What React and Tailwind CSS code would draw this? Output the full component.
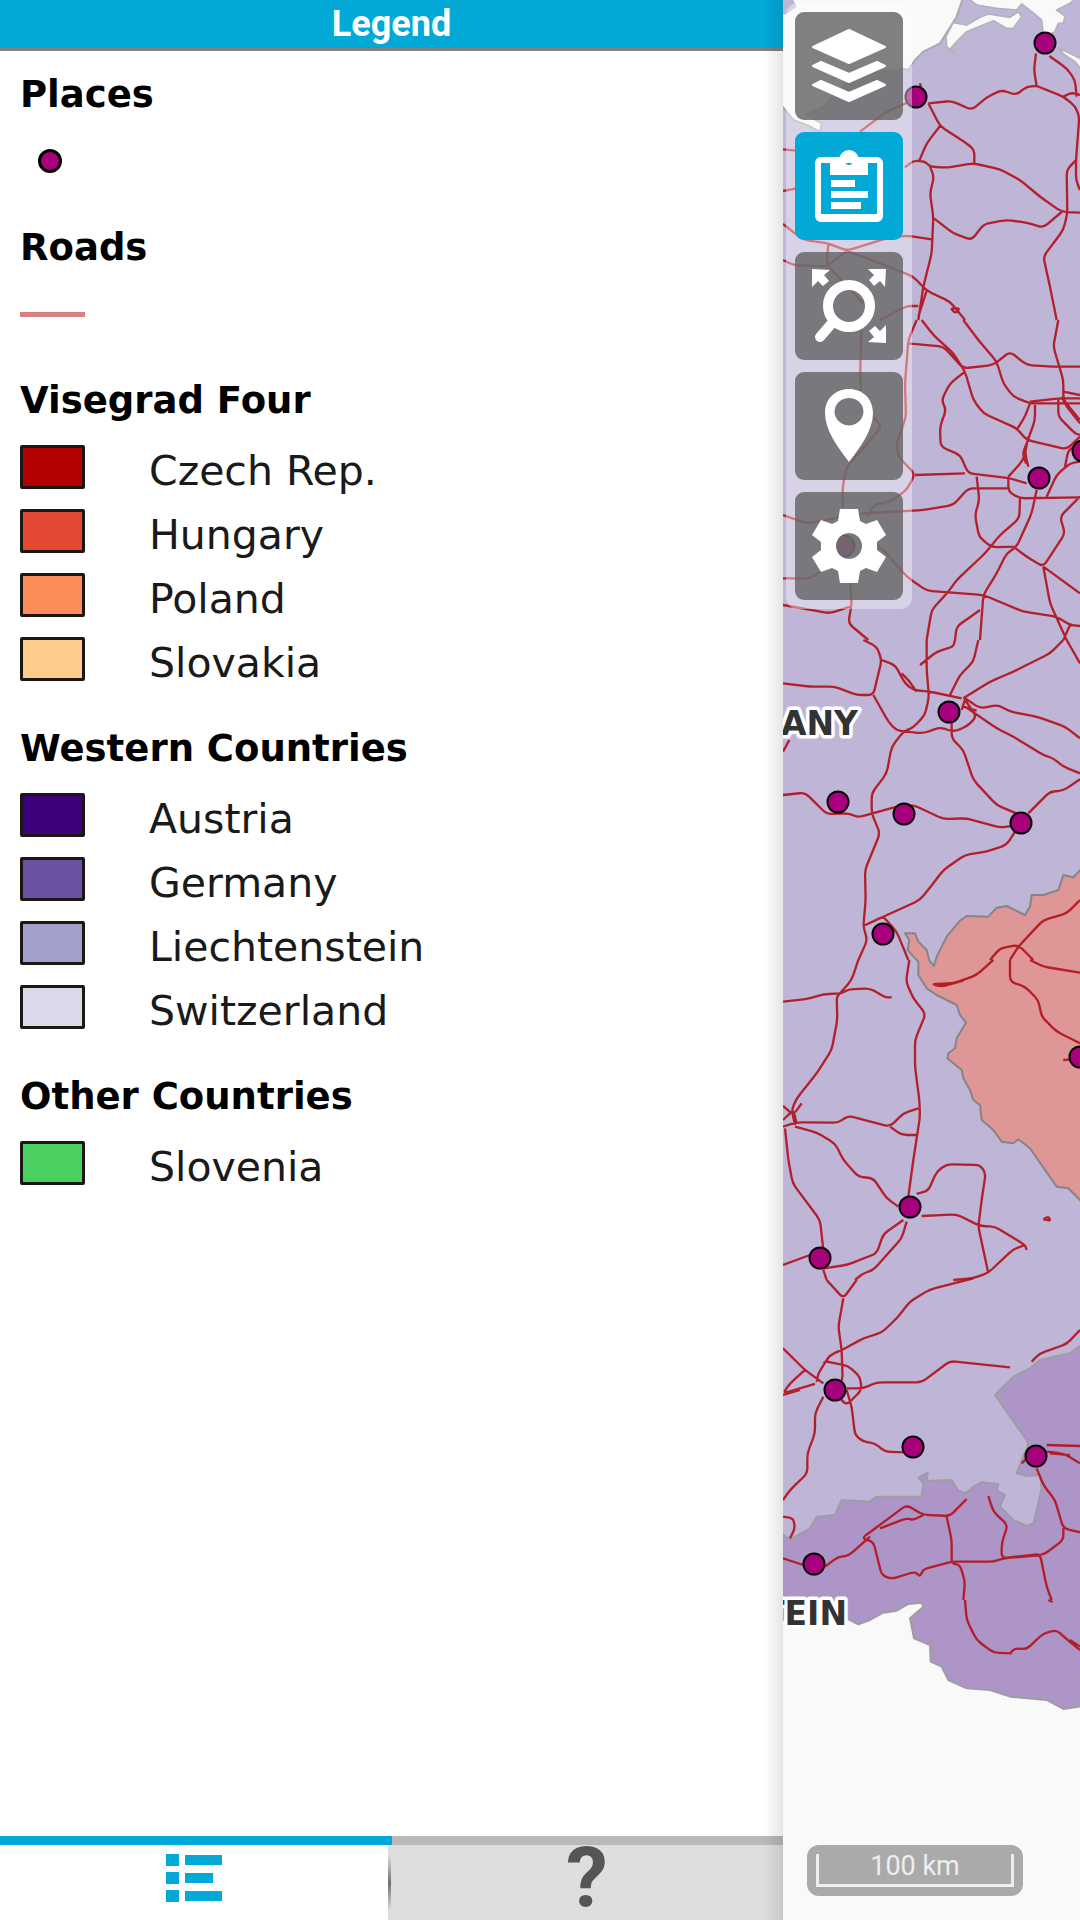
import React, { useState } from "react";

const legend = [
  { title: "Places", symbol: "point" },
  { title: "Roads", symbol: "line" },
  {
    title: "Visegrad Four",
    items: [
      ["Czech Rep.", "bg-[#b30000]"],
      ["Hungary", "bg-[#e34a33]"],
      ["Poland", "bg-[#fc8d59]"],
      ["Slovakia", "bg-[#fdcc8a]"],
    ],
  },
  {
    title: "Western Countries",
    items: [
      ["Austria", "bg-[#3f007d]"],
      ["Germany", "bg-[#6a51a3]"],
      ["Liechtenstein", "bg-[#a29fca]"],
      ["Switzerland", "bg-[#dadaeb]"],
    ],
  },
  { title: "Other Countries", items: [["Slovenia", "bg-[#4bd162]"]] },
];

/* Road tiles: [vertical tile offset, path in tile units (3 per map unit)] */
const roads = [
  [
    0,
    "M768,160 L762,210 770,258 M770,258 L740,260 708,285 665,270 620,292 575,330 515,303 445,310 M770,258 L850,290 885,318 898,350 888,480 888,540 900,570 M808,168 L860,205 885,240 890,290 M850,290 L875,278 900,285 M445,310 L480,378 560,430 583,450 583,492 M480,378 L440,430 418,482 M375,502 L400,482 435,484 450,500 500,503 580,490 660,508 720,540 780,590 845,636 900,638 M450,500 L462,530 450,580 460,650 455,760 430,860 415,960 M462,655 L520,700 575,720 612,672 680,660 740,668 790,683 845,636 M888,480 L860,510 862,640 850,690 790,770 810,860 830,960 M455,718 L380,707 320,715 200,752 145,730 70,720 9,672 M145,730 L140,790 160,815 250,910 M9,780 L40,795 140,800 200,752 300,790 400,830 440,872 510,905 555,960 M240,395 L320,335 400,300 M9,448 L50,452 M9,573 L50,565 M440,872 L415,950 M415,918 L380,918 300,960 M515,925 L540,925 525,940 513,925 M420,250 L425,270",
  ],
  [
    960,
    "M410,0 L385,60 375,190 378,290 350,370 355,410 405,462 380,510 330,545 280,555 265,590 M245,0 L240,180 245,210 M280,290 L305,320 245,390 200,440 188,500 188,560 M405,465 L555,460 M385,70 L490,80 550,145 640,135 690,95 740,135 820,140 900,140 M425,0 L460,45 520,100 555,155 580,240 610,280 710,325 740,360 860,388 900,350 M550,0 L595,60 650,125 670,190 700,230 750,250 900,250 M835,0 L820,80 850,180 850,240 900,300 M555,155 L510,190 485,240 498,270 480,320 482,380 540,405 565,460 690,475 740,490 M9,585 L80,610 250,580 430,570 520,555 565,505 690,505 M590,470 L598,540 585,585 597,650 635,682 710,680 M685,470 L685,515 720,535 900,532 M720,535 L718,595 660,645 615,700 530,780 505,815 455,870 440,960 M770,510 L755,580 710,680 680,700 650,760 610,825 600,960 M765,255 L765,300 740,370 730,420 685,470 M750,250 L735,290 710,330 M745,350 L735,400 745,440 M740,370 L728,400 738,430 M900,530 L840,590 855,640 790,740 740,710 700,680 M790,740 L900,820 M790,740 L810,850 860,960 M9,775 L90,775 210,700 M250,640 L320,700 380,770 440,812 610,825 730,875 830,890 870,915 900,918 M210,780 L215,850 205,910 265,960 M9,855 L150,880 210,860 M600,870 L530,920 525,960 M750,245 L840,235 900,235 M850,215 L900,225 M835,240 L835,290 885,340 900,345 M845,230 L860,260 900,310 M800,530 L830,465 870,430 900,425 M900,370 L865,390 855,440 M850,960 L870,915",
  ],
  [
    1920,
    "M9,130 L90,140 165,140 230,165 280,165 305,60 290,20 250,0 M305,60 L345,75 375,130 400,150 450,155 545,175 M365,100 L385,120 410,155 M280,165 L325,245 350,272 430,280 480,262 520,275 560,260 590,230 555,180 M440,0 L440,90 447,170 435,225 400,262 370,275 335,320 320,400 275,460 275,520 300,580 255,690 257,780 250,860 262,900 235,960 M420,75 L470,35 520,20 525,0 M595,0 L580,65 540,105 510,165 M850,0 L810,40 700,95 630,125 550,175 M860,0 L900,70 M555,175 L600,205 655,195 690,215 770,230 855,260 900,295 M555,200 L650,265 700,290 790,345 820,355 850,380 900,400 M550,200 L590,212 M545,210 L555,178 M515,250 L515,295 550,330 580,420 650,495 720,525 M9,465 L75,458 140,522 205,520 235,532 350,500 400,495 490,537 560,535 660,563 720,555 M745,520 L810,455 850,452 900,418 M705,575 L680,615 620,635 555,645 490,690 460,730 420,780 310,830 250,858 M310,830 L350,875 385,960 M900,780 L860,820 790,840 715,920 690,960 M630,960 L660,925 715,915 760,960 M9,335 L28,300",
  ],
  [
    2880,
    "M235,0 L215,60 185,95 170,110 172,180 155,270 110,340 50,415 35,450 45,495 M9,125 L80,117 130,103 185,100 205,88 270,85 315,112 335,112 M388,0 L378,65 400,115 437,162 405,240 405,320 418,420 420,470 400,600 385,710 M9,438 L40,465 65,430 M20,470 L40,450 50,490 M9,480 L25,465 M9,500 L50,487 175,488 205,467 330,500 370,460 415,445 M330,500 L365,525 410,525 M45,500 L110,518 165,550 190,600 235,650 280,655 320,715 355,740 M15,505 L25,600 38,670 120,780 130,870 M410,702 L445,692 470,635 500,613 600,615 617,640 605,720 595,800 625,940 M425,768 L530,763 600,798 645,800 735,855 740,870 M735,855 L700,868 625,938 580,955 520,960 M370,780 L310,822 290,880 200,915 130,925 M380,785 L365,835 280,930 250,940 225,960 M9,915 L90,885 M130,930 L140,960 M640,0 L590,45 520,70 455,72 485,80 550,62 M690,0 L690,65 735,80 775,120 785,170 830,215 900,250 M750,0 L790,20 900,38 M790,778 L805,770 812,782 790,778 M850,300 L875,298",
  ],
  [
    3840,
    "M140,0 L190,55 230,0 M190,55 L175,140 185,210 188,300 170,320 M580,-5 L450,28 390,65 350,115 305,158 250,175 190,208 150,225 115,280 110,305 M9,205 L75,270 130,310 M75,270 L30,310 9,340 105,312 M9,345 L60,330 M140,245 L205,258 240,290 245,330 200,375 180,355 M130,250 L145,240 M200,325 L250,325 290,307 425,307 510,243 690,262 M130,350 L105,400 105,460 82,520 82,580 30,630 9,660 M200,330 L215,380 225,465 250,485 285,490 315,515 375,517 M755,245 L780,220 860,192 900,150 M800,495 L900,498 M800,515 L850,520 900,550 M810,520 L870,525 M725,550 L740,535 M770,565 L790,615 825,660 850,745 900,757 M850,745 L850,780 790,825 670,835 640,845 515,845 430,868 420,890 405,875 335,897 305,885 280,785 245,775 290,742 380,675 430,705 510,708 560,657 M300,745 L380,715 400,720 430,705 M500,710 L515,780 515,850 540,855 555,905 550,960 M625,648 L640,695 683,735 665,790 665,835 780,822 800,920 815,960 M270,770 L205,828 175,830 135,860 M9,835 L70,855 M9,710 L40,715 45,745 30,775 M555,960 L560,1020 590,1080 640,1118 695,1120 M690,1120 L705,1105 740,1108 790,1060 830,1050 860,1078 900,1110 M870,1080 L900,1100 M805,960 L818,966",
  ],
];

const BEND = 16;

/* Point on the way from one corner to the next, where the bend starts. */
function bendPoint([x, y], [tx, ty]) {
  const length = Math.hypot(tx - x, ty - y);
  const share = Math.min(0.4, BEND / length);
  return [x + (tx - x) * share, y + (ty - y) * share];
}

/* Rounds the bends of a polyline path, keeping its end points. */
function smooth(path) {
  return path
    .split("M")
    .filter((part) => part.trim())
    .map((part) => {
      const pts = part
        .replace("L", "")
        .trim()
        .split(/\s+/)
        .map((pair) => pair.split(",").map(Number));
      let d = `M${pts[0]}`;
      for (let i = 1; i < pts.length - 1; i++) {
        d += ` L${bendPoint(pts[i], pts[i - 1])} Q${pts[i]} ${bendPoint(pts[i], pts[i + 1])}`;
      }
      return `${d} L${pts[pts.length - 1]}`;
    })
    .join(" ");
}

const places = [
  [136, 97], [265, 43], [64, 546], [259, 478], [303, 451], [169, 712], [58, 802],
  [124, 814], [241, 823], [103, 934], [130, 1207], [40, 1258], [300, 1057],
  [55, 1390], [133, 1447], [256, 1456], [34, 1564],
];

function MapCanvas() {
  return (
    <svg
      className="absolute inset-0 h-full w-full"
      viewBox="3 0 297 1920"
      preserveAspectRatio="xMinYMin slice"
      role="img"
      aria-label="Map"
    >
      <rect width="320" height="1920" fill="#f9f9f9" />
      <g transform="scale(0.33333)" strokeLinejoin="round" strokeWidth="6">
        <path
          d="M550,-10 L530,50 480,130 430,155 405,180 385,210 370,206 260,220 190,260 130,320 80,345 125,370 120,395 80,375 40,360 0,310 V4700 H920 V-10Z"
          fill="#bfb5d7"
          stroke="#a9a9ae"
        />
        <path d="M0,-9 H35 L50,20 20,42 0,46Z" fill="#bfb5d7" />
        <g fill="#f9f9f9" stroke="#b3b3b8" strokeWidth="5">
          <path d="M560,-9 L590,15 650,25 710,30 725,12 755,35 785,60 790,110 825,95 835,70 850,70 855,48 830,30 870,10 890,-9Z" />
          <path d="M520,68 L560,75 600,52 625,42 690,52 715,35 725,50 700,85 680,85 640,62 560,95 530,125 512,145 525,163 500,140 498,110Z" />
          <path d="M835,145 L860,155 910,180 V215 L885,185 855,165Z" />
        </g>
        <g transform="translate(0 1920)">
          <path
            d="M910,680 L880,712 850,705 835,750 790,765 755,765 750,800 735,825 680,798 650,803 625,830 560,828 540,842 500,890 470,950 462,978 448,962 440,930 415,905 405,880 375,880 388,900 383,930 400,950 415,965 415,1005 440,1045 470,1065 530,1095 540,1125 558,1148 530,1195 525,1225 505,1240 502,1255 545,1290 550,1315 570,1350 580,1380 600,1395 605,1440 640,1470 665,1505 700,1510 715,1498 750,1525 830,1640 865,1645 910,1690Z"
            fill="#de9696"
            stroke="#858585"
          />
        </g>
        <g transform="translate(0 3840)">
          <path
            d="M910,190 L870,220 780,240 750,265 700,290 645,345 690,410 740,480 745,495 725,540 710,580 740,588 780,585 785,625 770,690 760,730 740,738 700,720 660,680 675,645 650,630 655,612 605,607 580,620 558,640 535,632 515,600 440,603 443,578 415,593 430,610 425,650 290,650 270,665 185,660 165,705 110,710 90,745 30,778 -10,750 V1020 L200,1015 235,1033 270,1020 310,998 350,992 385,972 425,968 430,980 390,1015 402,1075 450,1095 452,1145 485,1160 505,1200 560,1225 630,1230 690,1250 800,1260 850,1287 910,1278Z"
            fill="#ad95c7"
            stroke="#9e9da1"
          />
        </g>
      </g>
      <g
        fill="none"
        stroke="#b2141c"
        strokeOpacity="0.92"
        strokeWidth="7"
        strokeLinejoin="round"
        transform="scale(0.33333)"
      >
        {roads.map(([y, d]) => (
          <path key={y} d={smooth(d)} transform={`translate(0 ${y})`} />
        ))}
      </g>
      <g fill="#a8007c" stroke="#0a0008" strokeWidth="2">
        {places.map(([x, y]) => (
          <circle key={`${x}-${y}`} cx={x} cy={y} r="10.5" />
        ))}
      </g>
      <g
        className="font-['DejaVu_Sans',sans-serif] text-[33px] font-bold"
        fill="#333"
        stroke="#fff"
        strokeWidth="7"
        strokeLinejoin="round"
        paintOrder="stroke"
        textAnchor="end"
      >
        <text x="78" y="735">ANY</text>
        <text x="67" y="1625">TEIN</text>
      </g>
    </svg>
  );
}

const arrow = "M0,0 L18,1 12,6 17,12 11,17 6,12 0,18Z";

const tools = [
  {
    label: "Layers",
    art: (
      <path
        strokeWidth="2"
        strokeLinejoin="round"
        stroke="#fff"
        d="M54,18 L90,35 54,51 18,35Z M18,54 L26,50 54,62 82,50 90,54 54,70Z M18,73 L26,69 54,81 82,69 90,73 54,89Z"
      />
    ),
  },
  {
    label: "Legend",
    art: (
      <>
        <rect x="23" y="28" width="62" height="59" rx="3" fill="none" stroke="#fff" strokeWidth="6" />
        <path
          fillRule="evenodd"
          d="M35,28 H44 A10,10 0 0 1 64,28 H73 V43 H35Z M54,25 a4,4 0 1 0 .01,0Z M36,48 H60 V55 H36Z M36,59 H73 V66 H36Z M36,70 H66 V77 H36Z M26,82 H82 V84 H26Z"
        />
      </>
    ),
  },
  {
    label: "Zoom to extent",
    art: (
      <>
        <circle cx="54" cy="54" r="21" fill="none" stroke="#fff" strokeWidth="10" />
        <path d="M38,70 L25,85" stroke="#fff" strokeWidth="10" strokeLinecap="round" />
        <path d={arrow} transform="translate(17 17)" />
        <path d={arrow} transform="translate(91 17) rotate(90)" />
        <path d={arrow} transform="translate(91 91) rotate(180)" />
      </>
    ),
  },
  {
    label: "Show location",
    art: (
      <path
        fillRule="evenodd"
        d="M54,17 C41,17 30,26 30,41 C30,58 42,74 54,90 C66,74 78,58 78,41 C78,26 67,17 54,17Z M54,26 a14.5,13.7 0 1 1 -.01,0Z"
      />
    ),
  },
  {
    label: "Settings",
    art: (
      <path
        fillRule="evenodd"
        d="M45,17 H63 L65,29 71,32 82,28 91,43 82,50 V58 L91,65 82,80 71,76 65,79 63,91 H45 L43,79 37,76 26,80 17,65 26,58 V50 L17,43 26,28 37,32 43,29Z M54,41 a13,13 0 1 0 .01,0Z"
      />
    ),
  },
];

function LegendSection({ title, symbol, items }) {
  return (
    <section className="mb-[34px]">
      <h2 className="mb-[10px] text-[37px] leading-[48px] font-bold">{title}</h2>
      {symbol && (
        <div className="flex h-[61px] w-[65px] items-center pt-[3px]">
          {symbol === "point" ? (
            <span className="ml-[18px] size-6 rounded-full border-[3px] border-black bg-[#a8007c]" />
          ) : (
            <span className="h-[5px] w-full bg-[#d98082]" />
          )}
        </div>
      )}
      {items && (
        <ul>
          {items.map(([name, color]) => (
            <li key={name} className="flex h-16 items-center gap-16">
              <span className={`h-11 w-[65px] shrink-0 rounded-xs border-[3px] border-[#1c1712] ${color}`} />
              <span className="pt-2 text-[41px] leading-[48px] text-[#1a1a1a]">{name}</span>
            </li>
          ))}
        </ul>
      )}
    </section>
  );
}

export default function App() {
  const [tab, setTab] = useState("legend");
  const [tool, setTool] = useState("Legend");
  return (
    <div className="flex min-h-screen overflow-hidden bg-white font-[Roboto,sans-serif]">
      <aside className="relative flex w-[72.5%] flex-col bg-white">
        <header className="border-b-[3px] border-[#808080] bg-[#02a9d7]">
          <h1 className="text-center text-[36px] leading-[48px] font-bold text-white">Legend</h1>
        </header>
        <div className="flex-1 pt-5 pl-5 font-['DejaVu_Sans',sans-serif] text-black">
          {legend.map((section) => (
            <LegendSection key={section.title} {...section} />
          ))}
        </div>
        <nav>
          <div className="flex h-[9px] bg-[#b9b9b9]">
            <span className="w-1/2 bg-[#02a9d7]" />
          </div>
          <div className="flex h-[75px]">
            <button
              type="button"
              aria-label="Legend items"
              aria-pressed={tab === "legend"}
              onClick={() => setTab("legend")}
              className="flex w-[49.5%] items-start justify-center bg-white pt-[9px]"
            >
              <svg width="56" height="48" viewBox="0 0 56 48" fill="#02a9d7" aria-hidden="true">
                <path d="M0,0 H13 V12 H0Z M0,18 H13 V30 H0Z M0,36 H13 V48 H0Z" />
                <path d="M19,1 H56 V11 H19Z M19,19 H47 V29 H19Z M19,37 H56 V47 H19Z" />
              </svg>
            </button>
            <div className="flex flex-1 items-start bg-[#dedede]">
              <span className="mt-[10px] h-14 w-[3px] bg-linear-to-b from-transparent via-[#707070] to-transparent" />
              <button
                type="button"
                aria-label="Help"
                aria-pressed={tab === "help"}
                onClick={() => setTab("help")}
                className="flex-1 text-[84px] leading-[68px] font-bold text-[#555]"
              >
                ?
              </button>
            </div>
          </div>
        </nav>
        <div className="pointer-events-none absolute inset-y-0 right-0 w-5 bg-linear-to-l from-black/10 to-transparent" />
      </aside>

      <main className="relative flex flex-1 flex-col items-start justify-between overflow-hidden bg-[#f9f9f9]">
        <MapCanvas />
        <div className="relative mt-[3px] ml-[3px] flex flex-col gap-3 rounded-xl bg-white/40 p-[9px]">
          {tools.map(({ label, art }) => (
            <button
              key={label}
              type="button"
              aria-label={label}
              aria-pressed={tool === label}
              onClick={() => setTool(label)}
              className={`size-[108px] rounded-[9px] ${tool === label ? "bg-[#02a9d7]" : "bg-[#626262]/80"}`}
            >
              <svg viewBox="0 0 108 108" fill="#fff" aria-hidden="true">
                {art}
              </svg>
            </button>
          ))}
        </div>
        <div className="relative mb-6 ml-6 w-[216px] rounded-xl bg-[#aaa] p-[9px]">
          <div className="h-[33px] border-[3px] border-t-0 border-[#eee] text-center text-[27px] leading-6 text-[#eee]">
            100 km
          </div>
        </div>
      </main>
    </div>
  );
}
